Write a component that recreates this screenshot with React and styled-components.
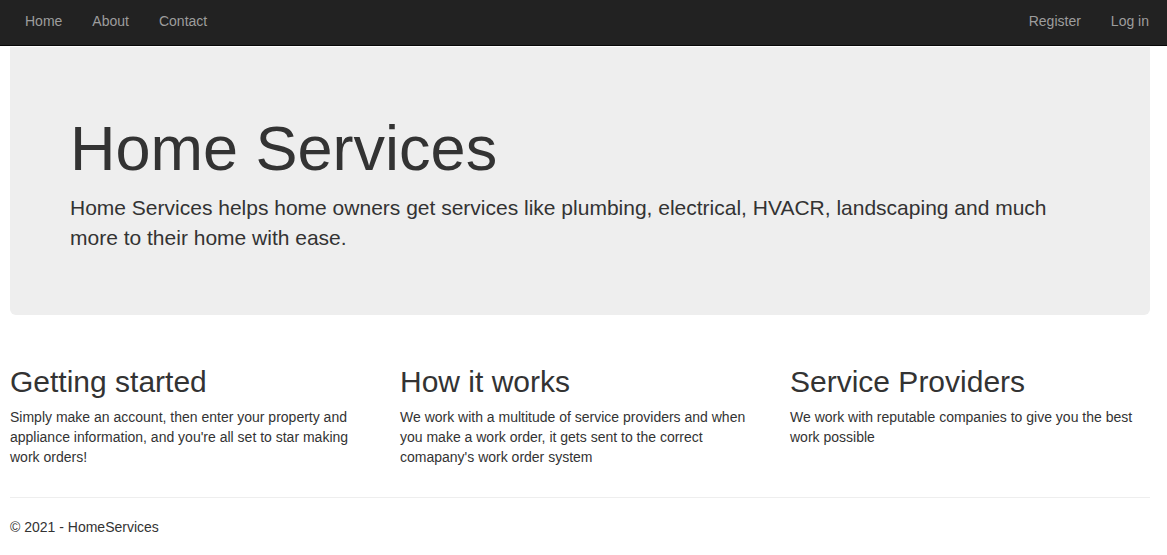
import styled, { createGlobalStyle } from 'styled-components';

const GlobalStyle = createGlobalStyle`
  html, body {
    margin: 0;
    padding: 0;
    background: #fff;
  }
  body {
    font-family: "Liberation Sans", Arial, Helvetica, sans-serif;
    font-size: 14px;
    line-height: 1.42857;
    color: #333;
  }
  * {
    box-sizing: border-box;
  }
`;

const links = ['Home', 'About', 'Contact'];
const accountLinks = ['Register', 'Log in'];

const columns = [
  {
    title: 'Getting started',
    text: "Simply make an account, then enter your property and appliance information, and you're all set to star making work orders!",
  },
  {
    title: 'How it works',
    text: "We work with a multitude of service providers and when you make a work order, it gets sent to the correct comapany's work order system",
  },
  {
    title: 'Service Providers',
    text: 'We work with reputable companies to give you the best work possible',
  },
];

const App = () => (
  <>
    <GlobalStyle />
    <Navbar>
      <NavList>
        {links.map(link => (
          <li key={link}>
            <NavLink href="#">{link}</NavLink>
          </li>
        ))}
      </NavList>
      <NavList>
        {accountLinks.map(link => (
          <li key={link}>
            <NavLink href="#">{link}</NavLink>
          </li>
        ))}
      </NavList>
    </Navbar>
    <Body>
      <Jumbotron>
        <h1>Home Services</h1>
        <Lead>
          Home Services helps home owners get services like plumbing, electrical, HVACR, landscaping and much
          more to their home with ease.
        </Lead>
      </Jumbotron>
      <Row>
        {columns.map(col => (
          <Column key={col.title}>
            <h2>{col.title}</h2>
            <p>{col.text}</p>
          </Column>
        ))}
      </Row>
      <Divider />
      <Footer>
        <p>&copy; 2021 - HomeServices</p>
      </Footer>
    </Body>
  </>
);

const Navbar = styled.nav`
  display: flex;
  justify-content: space-between;
  align-items: flex-start;
  height: 46px;
  padding: 0 3px 0 10px;
  background-color: #222;
  border-bottom: 1px solid #080808;
`;

const NavList = styled.ul`
  display: flex;
  margin: 0;
  padding: 0;
  list-style: none;
  li {
    display: block;
  }
`;

const NavLink = styled.a`
  display: block;
  padding: 11px 15px 13px;
  line-height: 20px;
  font-size: 14px;
  color: #9d9d9d;
  text-decoration: none;
`;

const Body = styled.div`
  width: 1140px;
  margin-left: 10px;
  padding-top: 1px;
`;

const Jumbotron = styled.div`
  background-color: #eee;
  border-radius: 0 0 6px 6px;
  padding: 48px 60px 48px;
  margin-bottom: 30px;
  h1 {
    margin: 19px 0 10px;
    font-size: 63px;
    font-weight: 500;
    line-height: 1.1;
    color: inherit;
  }
`;

const Lead = styled.p`
  margin: 0 0 15px;
  font-size: 21px;
  font-weight: 300;
  line-height: 1.4;
  max-width: 1000px;
`;

const Row = styled.div`
  display: grid;
  grid-template-columns: repeat(3, 390px);
`;

const Column = styled.div`
  padding-right: 30px;
  h2 {
    margin: 20px 0 10px;
    font-size: 30px;
    font-weight: 500;
    line-height: 1.1;
  }
  p {
    margin: 0 0 10px;
  }
`;

const Divider = styled.hr`
  margin: 19px 0 20px;
  border: 0;
  border-top: 1px solid #eee;
`;

const Footer = styled.footer`
  p {
    margin: 0 0 10px;
  }
`;

export default App;
